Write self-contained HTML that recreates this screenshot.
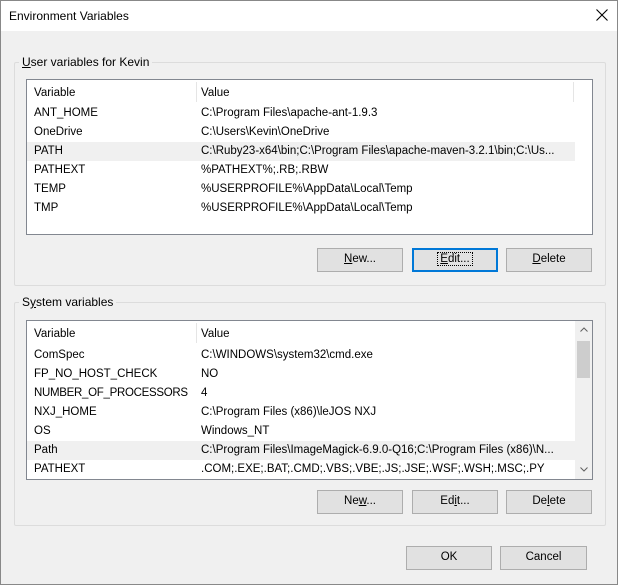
<!DOCTYPE html>
<html><head><style>
body{margin:0;width:618px;height:585px;background:#f0f0f0;font-family:"Liberation Sans",sans-serif;font-size:11.5px;color:#000;position:relative;overflow:hidden}
.abs{position:absolute}
.win{left:0;top:0;width:616px;height:583px;border:1px solid #888;background:#f0f0f0}
.title{left:1px;top:1px;width:616px;height:30px;background:#fff}
.grp{border:1px solid #dcdcdc;border-radius:2px}
.lbl{background:#f0f0f0;padding:0 3px;line-height:14px}
.list{background:#fff;border:1px solid #828790;overflow:hidden}
.row{position:absolute;left:0;right:0;height:19px;line-height:19px}
.row span{position:absolute}
.btn{background:#e1e1e1;border:1px solid #adadad;text-align:center;line-height:21px;box-sizing:border-box}
.sel{background:#f0f0f0}
</style></head><body>
<div class="abs win"></div>
<div class="abs title"></div>
<div class="abs" style="left:9px;top:9px;font-size:12px">Environment Variables</div>
<svg class="abs" style="left:596px;top:9px" width="12" height="12"><path d="M0.5 0.5L11.5 11.5M11.5 0.5L0.5 11.5" stroke="#000" stroke-width="1.1"/></svg>

<div class="abs grp" style="left:14px;top:62px;width:590px;height:222px"></div>
<div class="abs lbl" style="left:19px;top:55px;font-size:12px"><u>U</u>ser variables for Kevin</div>
<div class="abs list" style="left:26px;top:79px;width:565px;height:154px">
 <div class="row" style="top:2px;height:22px;line-height:22px"><span style="left:7px">Variable</span><span style="left:174px">Value</span></div>
 <div class="abs" style="left:169px;top:2px;width:1px;height:20px;background:#e5e5e5"></div>
 <div class="abs" style="left:546px;top:2px;width:1px;height:20px;background:#e5e5e5"></div>
 <div class="row" style="top:24px"><span style="left:7px">ANT_HOME</span><span style="left:174px">C:\Program Files\apache-ant-1.9.3</span></div>
 <div class="row" style="top:43px"><span style="left:7px">OneDrive</span><span style="left:174px">C:\Users\Kevin\OneDrive</span></div>
 <div class="row sel" style="top:62px;right:17px"><span style="left:7px">PATH</span><span style="left:174px">C:\Ruby23-x64\bin;C:\Program Files\apache-maven-3.2.1\bin;C:\Us...</span></div>
 <div class="row" style="top:81px"><span style="left:7px">PATHEXT</span><span style="left:174px">%PATHEXT%;.RB;.RBW</span></div>
 <div class="row" style="top:100px"><span style="left:7px">TEMP</span><span style="left:174px">%USERPROFILE%\AppData\Local\Temp</span></div>
 <div class="row" style="top:119px"><span style="left:7px">TMP</span><span style="left:174px">%USERPROFILE%\AppData\Local\Temp</span></div>
</div>
<div class="abs btn" style="left:317px;top:248px;width:86px;height:24px"><u>N</u>ew...</div>
<div class="abs btn" style="left:412px;top:248px;width:86px;height:24px;border:1px solid #0078d7;box-shadow:inset 0 0 0 1px #0078d7"><span style="outline:1px dotted #000;padding:0 2px"><u>E</u>dit...</span></div>
<div class="abs btn" style="left:506px;top:248px;width:86px;height:24px"><u>D</u>elete</div>

<div class="abs grp" style="left:14px;top:302px;width:590px;height:222px"></div>
<div class="abs lbl" style="left:19px;top:295px;font-size:12px">S<u>y</u>stem variables</div>
<div class="abs list" style="left:26px;top:320px;width:565px;height:158px">
 <div class="row" style="top:2px;height:22px;line-height:22px"><span style="left:7px">Variable</span><span style="left:174px">Value</span></div>
 <div class="abs" style="left:169px;top:2px;width:1px;height:20px;background:#e5e5e5"></div>
 <div class="row" style="top:25px"><span style="left:7px">ComSpec</span><span style="left:174px">C:\WINDOWS\system32\cmd.exe</span></div>
 <div class="row" style="top:44px"><span style="left:7px">FP_NO_HOST_CHECK</span><span style="left:174px">NO</span></div>
 <div class="row" style="top:63px"><span style="left:7px;letter-spacing:-0.3px">NUMBER_OF_PROCESSORS</span><span style="left:174px">4</span></div>
 <div class="row" style="top:82px"><span style="left:7px">NXJ_HOME</span><span style="left:174px">C:\Program Files (x86)\leJOS NXJ</span></div>
 <div class="row" style="top:101px"><span style="left:7px">OS</span><span style="left:174px">Windows_NT</span></div>
 <div class="row sel" style="top:120px;right:17px"><span style="left:7px">Path</span><span style="left:174px">C:\Program Files\ImageMagick-6.9.0-Q16;C:\Program Files (x86)\N...</span></div>
 <div class="row" style="top:139px"><span style="left:7px">PATHEXT</span><span style="left:174px">.COM;.EXE;.BAT;.CMD;.VBS;.VBE;.JS;.JSE;.WSF;.WSH;.MSC;.PY</span></div>
 <div class="abs" style="left:548px;top:0;width:17px;height:158px;background:#f0f0f0"></div>
 <div class="abs" style="left:550px;top:20px;width:13px;height:37px;background:#cdcdcd"></div>
 <svg class="abs" style="left:553px;top:6px" width="8" height="5"><path d="M0.5 4.5L4 1L7.5 4.5" stroke="#606060" fill="none"/></svg>
 <svg class="abs" style="left:553px;top:146px" width="8" height="5"><path d="M0.5 0.5L4 4L7.5 0.5" stroke="#606060" fill="none"/></svg>
</div>
<div class="abs btn" style="left:317px;top:490px;width:86px;height:24px">Ne<u>w</u>...</div>
<div class="abs btn" style="left:412px;top:490px;width:86px;height:24px">Ed<u>i</u>t...</div>
<div class="abs btn" style="left:506px;top:490px;width:86px;height:24px">De<u>l</u>ete</div>

<div class="abs btn" style="left:406px;top:546px;width:86px;height:24px">OK</div>
<div class="abs btn" style="left:500px;top:546px;width:87px;height:24px">Cancel</div>
</body></html>
